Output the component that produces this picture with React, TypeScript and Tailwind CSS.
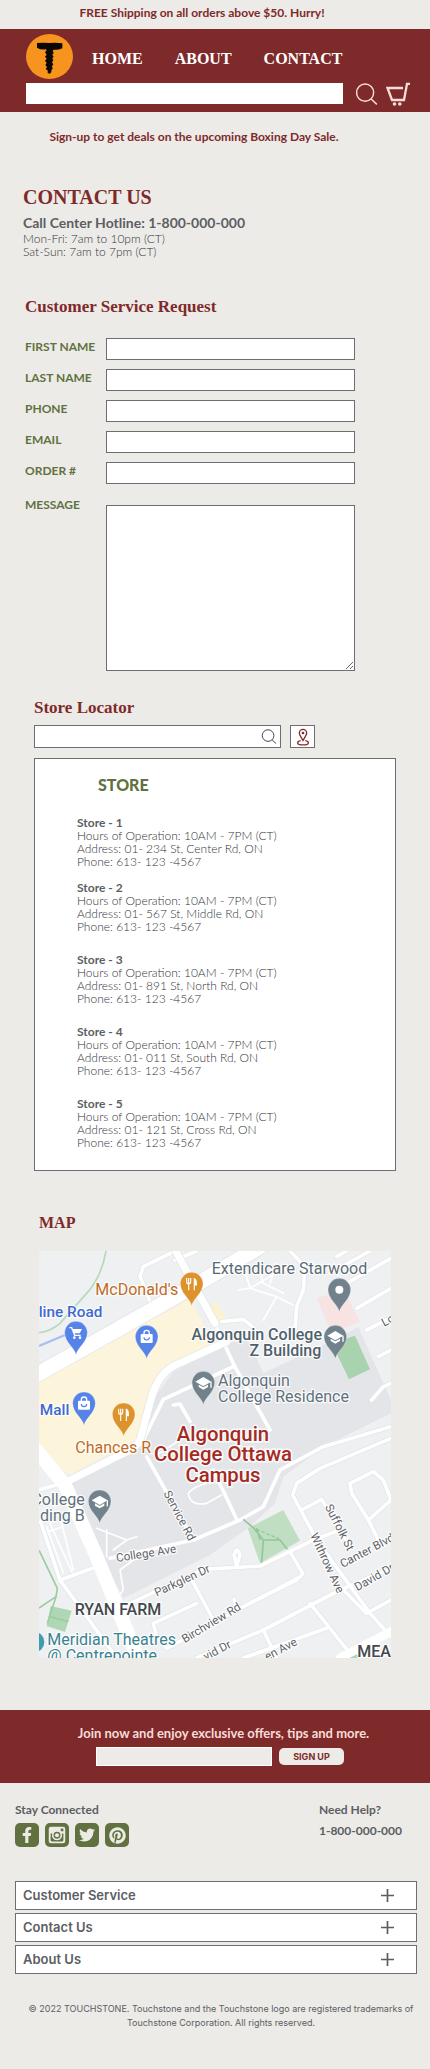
import React from "react";
import { FaFacebookF, FaPinterest, FaTwitter } from "react-icons/fa";

const SANS = "font-['Lato',sans-serif]";
const SERIF = "font-['Liberation_Serif',serif] font-bold";
const ROUND = "font-['Inter',sans-serif]";

function Logo() {
  return (
    <svg viewBox="78 102 141 135" className="h-[45px] w-[47px]" role="img" aria-label="Touchstone">
      <ellipse cx="148.500" cy="169.500" rx="70.500" ry="67.500" fill="#f7941e" />
      <path
        d="M111 129 Q130 128 149 129 Q168 127 187 130 L187 145 Q173 151 161 149 L158 153 L161 159 L157 164 L161 170 L157 175 L160 181 L156 187 L160 193 L156 199 L158 206 L154 211 L154 217 L148 222 L142 217 L144 212 L137 207 L141 201 L136 195 L140 189 L135 182 L140 176 L135 170 L140 164 L135 157 L140 151 L138 148 Q124 151 111 143 Z"
        fill="#0b0703"
      />
    </svg>
  );
}

function SearchIcon({ className }: { className: string }) {
  return (
    <svg viewBox="0 0 24 24" className={className} fill="none" stroke="currentColor" strokeWidth="1.600" aria-hidden="true">
      <circle cx="10.500" cy="10.500" r="9.300" />
      <path d="M17 17.500 L23.300 23.300" />
    </svg>
  );
}

function CartIcon() {
  return (
    <svg viewBox="0 0 24 24" className="h-6 w-6" fill="none" stroke="#f8dcd8" strokeWidth="2" aria-hidden="true">
      <path d="M17 6 H1.500 L6 18 H18 L21 1.800 H24" strokeWidth="2.300" />
      <circle cx="8.500" cy="22" r="1.800" fill="#f8dcd8" stroke="none" />
      <circle cx="13.800" cy="22" r="1.800" fill="#f8dcd8" stroke="none" />
    </svg>
  );
}

function LocateIcon() {
  return (
    <svg viewBox="0 0 36 52" className="h-[18px] w-3" fill="none" stroke="#7f2a2a" strokeWidth="4" aria-hidden="true">
      <path d="M18 36 C14 28 7 22 7 14 A11 11 0 0 1 29 14 C29 22 22 28 18 36 Z" />
      <circle cx="18" cy="14" r="4" fill="#7f2a2a" stroke="none" />
      <path d="M11 37 C5 38 2 40 2 43 C2 47 9 49.500 18 49.500 S34 47 34 43 C34 40 31 38 25 37" />
    </svg>
  );
}

function InstagramIcon() {
  return (
    <svg viewBox="0 0 24 24" className="h-[18px] w-[18px]" aria-hidden="true">
      <rect x="1" y="1" width="22" height="22" rx="3" fill="#ecebe7" />
      <path d="M3.500 10 H6 A6.500 6.500 0 1 0 18 10 H20.500 V19 a1.500 1.500 0 0 1 -1.500 1.500 H5 A1.500 1.500 0 0 1 3.500 19 Z" fill="#61713f" />
      <circle cx="12" cy="12.300" r="6.500" fill="#ecebe7" />
      <circle cx="12" cy="12.300" r="4.600" fill="#61713f" />
      <circle cx="12" cy="12.300" r="2.700" fill="#ecebe7" />
      <rect x="17" y="3.500" width="3.500" height="3.500" fill="#61713f" />
    </svg>
  );
}

type PinKind = "food" | "cart" | "bag" | "dot" | "school";

const PIN_FILL: Record<PinKind, string> = {
  food: "#de922b",
  cart: "#5683e8",
  bag: "#5683e8",
  dot: "#71828d",
  school: "#71828d",
};

function Pin({ x, y, kind }: { x: number; y: number; kind: PinKind }) {
  return (
    <g transform={`translate(${x} ${y})`}>
      <path d="M0 66 C-5 44 -34 28 -34 0 A34 34 0 0 1 34 0 C34 28 5 44 0 66 Z" fill={PIN_FILL[kind]} stroke="#ffffff" strokeOpacity="0.6" strokeWidth="1.500" />
      {kind === "dot" && <circle r="12" fill="#fff" />}
      {kind === "food" && (
        <g stroke="#fff" fill="none" strokeWidth="3.500">
          <path d="M-15 -17 V-6 Q-15 0 -9 0 Q-3 0 -3 -6 V-17 M-9 -17 V20" />
          <path d="M8 20 V-15 Q15 -12 14 4 H8" fill="#fff" />
        </g>
      )}
      {kind === "cart" && (
        <g stroke="#fff" fill="none" strokeWidth="4">
          <path d="M-20 -15 H-13 L-4 8 H14" />
          <path d="M-11 -11 H18 L11 2 H-6 Z" fill="#fff" stroke="none" />
          <circle cx="-5" cy="15" r="4" fill="#fff" stroke="none" />
          <circle cx="12" cy="15" r="4" fill="#fff" stroke="none" />
        </g>
      )}
      {kind === "bag" && (
        <g>
          <rect x="-18" y="-8" width="36" height="27" rx="3" fill="#fff" />
          <path d="M-8 -7 V-11 A8 8 0 0 1 8 -11 V-7" fill="none" stroke="#fff" strokeWidth="4" />
          <path d="M-8 2 A8 8 0 0 0 8 2" fill="none" stroke="#5683e8" strokeWidth="3.500" />
        </g>
      )}
      {kind === "school" && (
        <g fill="#fff">
          <path d="M-24 -3 L0 -17 L24 -3 L0 11 Z" />
          <path d="M-14 6 L0 14 L14 6 V13 L0 21 L-14 13 Z" />
          <path d="M21 -3 H25 V15 H21 Z" />
        </g>
      )}
    </g>
  );
}

const PINS: { x: number; y: number; kind: PinKind }[] = [
  { x: 485, y: 131, kind: "food" },
  { x: 138, y: 278, kind: "cart" },
  { x: 350, y: 290, kind: "bag" },
  { x: 928, y: 149, kind: "dot" },
  { x: 916, y: 290, kind: "school" },
  { x: 520, y: 428, kind: "school" },
  { x: 162, y: 490, kind: "bag" },
  { x: 281, y: 523, kind: "food" },
  { x: 209, y: 784, kind: "school" },
];

const MINOR_ROADS = [
  "M550 240 L612 375 L720 570",
  "M575 245 L640 238 L670 262 L690 300",
  "M614 378 L400 478 L340 600",
  "M430 495 L450 492 L480 545",
  "M435 33 L340 80 L330 110 L360 185",
  "M435 60 L500 33",
  "M350 650 L490 900",
  "M240 955 L490 900 L630 840 L700 800 L750 690",
  "M550 690 L620 838",
  "M750 690 L880 620 L1083 560",
  "M1083 595 L870 685 L800 730 L788 765 L860 900 L1020 1120 L1083 1190",
  "M815 810 L875 778 L960 920",
  "M300 1090 L520 988 L690 978 L850 900 L930 870",
  "M620 978 L612 945 Q620 915 630 945 Z",
  "M480 1010 L550 1140",
  "M380 1190 L370 1150 L500 1090",
  "M380 1190 L410 1225 L640 1100 L800 1020",
  "M780 935 L818 1000 L812 1010 L640 1100",
  "M620 1100 L612 1078",
  "M840 1090 L960 1240",
  "M700 1170 L740 1254",
  "M500 1254 L700 1170 L930 1050 L1083 985",
  "M640 1254 L890 1165",
  "M940 1050 L1010 1120 L1083 1080",
  "M1015 840 L965 760 L960 730 L1030 695 L1060 720 L1083 780 L1015 840 L1045 900",
  "M90 1020 L200 980",
  "M27 830 L90 1020 L250 1240",
  "M27 750 L110 725",
  "M920 50 L950 33 M900 100 L1020 33 M950 130 L1083 55 M980 205 L1083 145 M1010 270 L1083 232 M1045 350 L1083 330 M1025 480 L1060 440 L1083 430",
  "M780 33 L825 80 L820 150 L800 200 L795 270",
];

const PATHS_THIN = [
  "M640 75 L660 145 L720 110 L770 80 M660 145 L740 170 L790 195 M690 90 L700 130 L760 160 M740 70 L720 130 M625 150 L655 145 M740 170 L700 240",
  "M475 760 Q490 740 530 730 M475 760 Q480 800 530 790 L575 765",
  "M200 865 L290 900 L250 930 M230 870 L230 950 M290 900 L320 890",
  "M250 1090 L280 1050 L270 990 L310 960",
  "M50 860 L100 1000 M40 880 L100 860 M60 850 L130 1005 M90 830 L130 990",
  "M380 645 L450 600",
];

const LABEL = "[paint-order:stroke] stroke-white/80 font-['Roboto',sans-serif]";

function StreetLabel({ x, y, angle, children }: { x: number; y: number; angle: number; children: string }) {
  return (
    <text transform={`translate(${x} ${y}) rotate(${angle})`} fontSize="35" strokeWidth="7" fill="#5f6368" className={LABEL}>
      {children}
    </text>
  );
}

function CampusMap() {
  return (
    <svg viewBox="27 33 1056 1221" className="block w-full" role="img" aria-label="Map of Algonquin College Ottawa Campus">
      <rect x="27" y="33" width="1056" height="1221" fill="#eff0f2" />
      <path d="M590 310 L430 395 L375 470 L340 590 L110 740 L220 960 L280 1075 L540 945 L660 860 L735 790 L760 710 L880 620 L1083 520 V480 L985 262 L890 310 L700 400 L655 300 Z" fill="#e4e5e9" />
      <path d="M27 425 L480 175 L550 310 L400 390 L350 480 L325 595 L120 705 L27 640 Z" fill="#fcf4db" />
      <path d="M548 190 L562 188 L592 242 L560 258 L535 215 Z" fill="#fcf1d0" />
      <path d="M860 175 L940 150 L990 245 L905 280 Z" fill="#f8e3e3" />
      <path d="M905 310 L975 287 L1020 388 L957 418 Z" fill="#a9d3ae" />
      <path d="M653 865 L760 810 L810 902 L690 970 Z" fill="#c0dfc2" />
      <path d="M62 1098 L125 1112 L105 1176 L50 1158 Z" fill="#b0d7b4" />
      <path d="M930 1254 L980 1238 L985 1254 Z" fill="#b0d7b4" />

      <g fill="none" stroke="#ffffff" strokeLinejoin="round" strokeLinecap="round">
        {PATHS_THIN.map((d) => (
          <path key={d} d={d} strokeWidth="5" />
        ))}
        {MINOR_ROADS.map((d) => (
          <path key={`${d}-edge`} d={d} stroke="#e2e4e8" strokeWidth="15" />
        ))}
        {MINOR_ROADS.map((d) => (
          <path key={d} d={d} strokeWidth="11" />
        ))}
        <path d="M930 1254 L1083 1175" strokeWidth="26" />
        <path d="M590 305 L430 378 Q385 405 365 470 L330 600 Q320 625 280 640 L110 725" stroke="#e2e4e8" strokeWidth="26" />
        <path d="M0 415 L300 247 L480 145 L690 20" stroke="#e2e4e8" strokeWidth="50" />
        <path d="M430 20 L500 150 L555 250" stroke="#e2e4e8" strokeWidth="26" />
        <path d="M590 305 L430 378 Q385 405 365 470 L330 600 Q320 625 280 640 L110 725" strokeWidth="22" />
        <path d="M0 415 L300 247 L480 145 L690 20" strokeWidth="45" />
        <path d="M430 20 L500 150 L555 250" strokeWidth="22" />
        <path d="M10 620 L105 735 L200 950 L330 1270" strokeWidth="42" />
      </g>

      <g fill="none" strokeLinejoin="round">
        <path d="M228 33 Q215 110 170 160 T90 250 Q60 275 27 278" stroke="#b5dab9" strokeWidth="5" />
        <path d="M27 318 L105 285" stroke="#a8bff0" strokeWidth="7" />
        <path d="M27 930 L82 1045 L78 1070 L27 1104 M78 1070 L52 1150 M60 1130 L115 1145" stroke="#9bcda1" strokeWidth="5" />
        <path d="M640 838 L672 865 L700 900 L695 968 M700 900 L750 900 L772 928 M680 865 L690 900" stroke="#92c698" strokeWidth="5" />
        <path d="M680 868 L750 898" stroke="#92c698" strokeWidth="4" strokeDasharray="10 6" />
      </g>

      <StreetLabel x={400} y={760} angle={62}>Service Rd</StreetLabel>
      <StreetLabel x={260} y={966} angle={-9}>College Ave</StreetLabel>
      <StreetLabel x={380} y={1070} angle={-25}>Parkglen Dr</StreetLabel>
      <StreetLabel x={464} y={1210} angle={-31}>Birchview Rd</StreetLabel>
      <StreetLabel x={884} y={800} angle={63}>Suffolk St</StreetLabel>
      <StreetLabel x={840} y={886} angle={65}>Withrow Ave</StreetLabel>
      <StreetLabel x={938} y={984} angle={-28}>Canter Blvd</StreetLabel>
      <StreetLabel x={982} y={1054} angle={-30}>David Dr</StreetLabel>
      <StreetLabel x={528} y={1262} angle={-28}>vid Dr</StreetLabel>
      <StreetLabel x={712} y={1262} angle={-28}>en Ave</StreetLabel>
      <StreetLabel x={1062} y={260} angle={-28}>Lo</StreetLabel>

      {PINS.map((pin) => (
        <Pin key={`${pin.x}-${pin.y}`} x={pin.x} y={pin.y} kind={pin.kind} />
      ))}
      <circle cx="12" cy="1206" r="31" fill="#3d9daf" />

      <g fontSize="48" strokeWidth="7" className={LABEL}>
        <text x="545" y="102" fill="#5b6b75">Extendicare Starwood</text>
        <text x="196" y="166" fill="#be6b26">McDonald's</text>
        <text x="217" y="230" textAnchor="end" fontSize="46" fill="#3f6ad0" fontWeight="500">line Road</text>
        <text x="118" y="524" textAnchor="end" fontSize="46" fill="#3f6ad0" fontWeight="500">Mall</text>
        <text x="136" y="640" fill="#be6b26">Chances R</text>
        <g fill="#4f616d" fontWeight="500" textAnchor="end">
          <text x="876" y="300">Algonquin College</text>
          <text x="874" y="348">Z Building</text>
        </g>
        <g fill="#5f717d">
          <text x="564" y="438">Algonquin</text>
          <text x="564" y="486">College Residence</text>
        </g>
        <g fill="#5f717d" textAnchor="end">
          <text x="164" y="795">College</text>
          <text x="164" y="843">lding B</text>
        </g>
        <g fill="#398290">
          <text x="52" y="1215">Meridian Theatres</text>
          <text x="52" y="1262">@ Centrepointe</text>
        </g>
        <text x="134" y="1125" fill="#44484d" fontWeight="500">RYAN FARM</text>
        <text x="982" y="1250" fill="#44484d" fontWeight="500">MEA</text>
      </g>
      <g fontSize="61" fontWeight="500" strokeWidth="9" textAnchor="middle" fill="#a52a22" className={LABEL}>
        <text x="579" y="603">Algonquin</text>
        <text x="579" y="664">College Ottawa</text>
        <text x="579" y="725">Campus</text>
      </g>
    </svg>
  );
}

const FIELDS = [
  { id: "first-name", label: "FIRST NAME", type: "text" },
  { id: "last-name", label: "LAST NAME", type: "text" },
  { id: "phone", label: "PHONE", type: "tel" },
  { id: "email", label: "EMAIL", type: "email" },
  { id: "order", label: "ORDER #", type: "text" },
];

const STORES = [
  { name: "Store - 1", address: "01- 234 St, Center Rd, ON" },
  { name: "Store - 2", address: "01- 567 St, Middle Rd, ON" },
  { name: "Store - 3", address: "01- 891 St, North Rd, ON" },
  { name: "Store - 4", address: "01- 011 St, South Rd, ON" },
  { name: "Store - 5", address: "01- 121 St, Cross Rd, ON" },
];

const SOCIAL_LINK = "flex h-6 w-6 items-center justify-center rounded-[5px] bg-[#61713f] text-[#ecebe7]";

export default function App() {
  return (
    <div className={`bg-[#ecebe7] text-[#5c5e63] ${SANS}`}>
      <p className="pt-px pr-[26px] pb-1 text-center text-[12px] leading-6 font-bold text-[#7f2a2a]">
        FREE Shipping on all orders above $50. Hurry!
      </p>

      <header className="bg-[#7f2a2a] pt-[5px] pr-5 pb-2 pl-[26px]">
        <div className="flex items-center">
          <a href="#home" aria-label="Touchstone home">
            <Logo />
          </a>
          <nav className={`ml-[19px] flex gap-8 pt-1 text-[16px] leading-6 text-white ${SERIF}`}>
            <a href="#home">HOME</a>
            <a href="#about">ABOUT</a>
            <a href="#contact">CONTACT</a>
          </nav>
        </div>
        <form className="mt-1 flex items-center">
          <input type="search" aria-label="Search the site" className="h-[21px] min-w-0 flex-1 bg-white px-2 text-[12px] outline-none" />
          <button type="button" aria-label="Search" className="-my-1 ml-3 text-[#f8dcd8]">
            <SearchIcon className="h-[22px] w-[23px]" />
          </button>
          <button type="button" aria-label="Cart" className="-my-1 ml-2">
            <CartIcon />
          </button>
        </form>
      </header>

      <main>
        <p className="mt-[13px] pr-[42px] text-center text-[12px] leading-6 font-bold text-[#7f2a2a]">
          Sign-up to get deals on the upcoming Boxing Day Sale.
        </p>

        <section className="px-[23px]">
          <h1 className={`mt-[34px] text-[20px] leading-7 text-[#7f2a2a] ${SERIF}`}>CONTACT US</h1>
          <p className="mt-[3px] text-[14px] leading-[18px] font-bold">Call Center Hotline: 1-800-000-000</p>
          <p className="text-[12px] leading-[13px] font-light text-[#33353a]">Mon-Fri: 7am to 10pm (CT)</p>
          <p className="text-[12px] leading-[13px] font-light text-[#33353a]">Sat-Sun: 7am to 7pm (CT)</p>
        </section>

        <section className="pr-[75px] pl-[25px]">
          <h2 className={`mt-[37px] text-[17px] leading-6 text-[#7f2a2a] ${SERIF}`}>Customer Service Request</h2>
          <form className="mt-[19px] text-[12px] font-bold text-[#61713f]">
            <div className="flex flex-col gap-[9px]">
              {FIELDS.map((field) => (
                <div key={field.id} className="flex">
                  <label htmlFor={field.id} className="w-[81px] shrink-0 leading-[18px]">
                    {field.label}
                  </label>
                  <input id={field.id} type={field.type} className="h-[22px] min-w-0 flex-1 border border-[#6d6e71] bg-white px-1 outline-none" />
                </div>
              ))}
            </div>
            <div className="mt-3 flex">
              <label htmlFor="message" className="w-[81px] shrink-0 leading-[18px]">
                MESSAGE
              </label>
              <textarea id="message" className="mt-[9px] h-[166px] min-w-0 flex-1 border border-[#6d6e71] bg-white p-1 outline-none" />
            </div>
          </form>
        </section>

        <section className="px-[34px]">
          <h2 className={`mt-[25px] text-[17px] leading-6 text-[#7f2a2a] ${SERIF}`}>Store Locator</h2>
          <form className="mt-[5px] flex gap-[9px] pr-[81px]">
            <div className="flex h-[23px] min-w-0 flex-1 items-center border border-[#6d6e71] bg-white pr-[3px]">
              <input type="search" aria-label="Find a store" className="min-w-0 flex-1 px-1 text-[12px] outline-none" />
              <button type="button" aria-label="Search stores" className="text-[#44464a]">
                <SearchIcon className="h-[15px] w-4" />
              </button>
            </div>
            <button type="button" aria-label="Use my location" className="flex h-[23px] w-[25px] items-center justify-center border border-[#6d6e71] bg-white">
              <LocateIcon />
            </button>
          </form>
          <div className="mt-[10px] border border-[#6d6e71] bg-white pt-[14px] pb-px">
            <h3 className="pl-[63px] text-[16px] leading-6 font-black text-[#61713f]">STORE</h3>
            <ul className="mt-[19px] pl-[42px] text-[12px] leading-[13px] font-light text-[#33353a]">
              {STORES.map((store) => (
                <li key={store.name} className="mb-5 first:mb-[13px]">
                  <p className="font-bold text-[#5c5e63]">{store.name}</p>
                  <p>Hours of Operation: 10AM - 7PM (CT)</p>
                  <p>Address: {store.address}</p>
                  <p>Phone: 613- 123 -4567</p>
                </li>
              ))}
            </ul>
          </div>
        </section>

        <section className="px-[39px]">
          <h2 className={`mt-10 mb-4 text-[16px] leading-6 text-[#7f2a2a] ${SERIF}`}>MAP</h2>
          <CampusMap />
        </section>
      </main>

      <section className="mt-[52px] bg-[#7f2a2a] pt-[11px] pb-[17px]">
        <p className="pl-[17px] text-center text-[13px] leading-6 font-bold text-[#f8dcd8]">
          Join now and enjoy exclusive offers, tips and more.
        </p>
        <form className="mt-[2px] flex items-center justify-center gap-[7px] pl-[10px]">
          <input type="email" aria-label="Email address" className="h-[19px] w-[176px] border border-white bg-[#ecebe7] px-1 text-[12px] outline-none" />
          <button type="submit" className={`h-[17px] w-[65px] rounded-[5px] bg-[#ecebe7] text-[9px] font-bold text-[#7f2a2a] ${ROUND}`}>
            SIGN UP
          </button>
        </form>
      </section>

      <footer className="pt-[19px] pb-[39px]">
        <div className="flex justify-between pr-7 pl-[15px] text-[12px] font-bold">
          <div>
            <p className="leading-4">Stay Connected</p>
            <div className="mt-[5px] flex gap-[6px]">
              <a href="#facebook" aria-label="Facebook" className={SOCIAL_LINK}>
                <FaFacebookF size={16} />
              </a>
              <a href="#instagram" aria-label="Instagram" className={SOCIAL_LINK}>
                <InstagramIcon />
              </a>
              <a href="#twitter" aria-label="Twitter" className={SOCIAL_LINK}>
                <FaTwitter size={16} />
              </a>
              <a href="#pinterest" aria-label="Pinterest" className={SOCIAL_LINK}>
                <FaPinterest size={17} />
              </a>
            </div>
          </div>
          <div>
            <p className="leading-4">Need Help?</p>
            <p className="mt-[5px] leading-4">1-800-000-000</p>
          </div>
        </div>

        <div className={`mt-[34px] mr-[13px] ml-[15px] flex flex-col gap-[3px] ${ROUND}`}>
          {["Customer Service", "Contact Us", "About Us"].map((title) => (
            <button key={title} type="button" className="flex h-[29px] items-center justify-between border border-[#6d6e71] bg-white pr-[22px] pl-[7px] text-[13px] font-semibold">
              {title}
              <svg viewBox="0 0 13 13" className="h-[13px] w-[13px]" stroke="currentColor" strokeWidth="1.700" aria-hidden="true">
                <path d="M6.500 0 V13 M0 6.500 H13" />
              </svg>
            </button>
          ))}
        </div>

        <p className={`mt-7 pr-[10px] pl-[22px] text-center text-[9px] leading-[14px] ${ROUND}`}>
          © 2022 TOUCHSTONE. Touchstone and the Touchstone logo are registered trademarks of Touchstone Corporation. All rights reserved.
        </p>
      </footer>
    </div>
  );
}
